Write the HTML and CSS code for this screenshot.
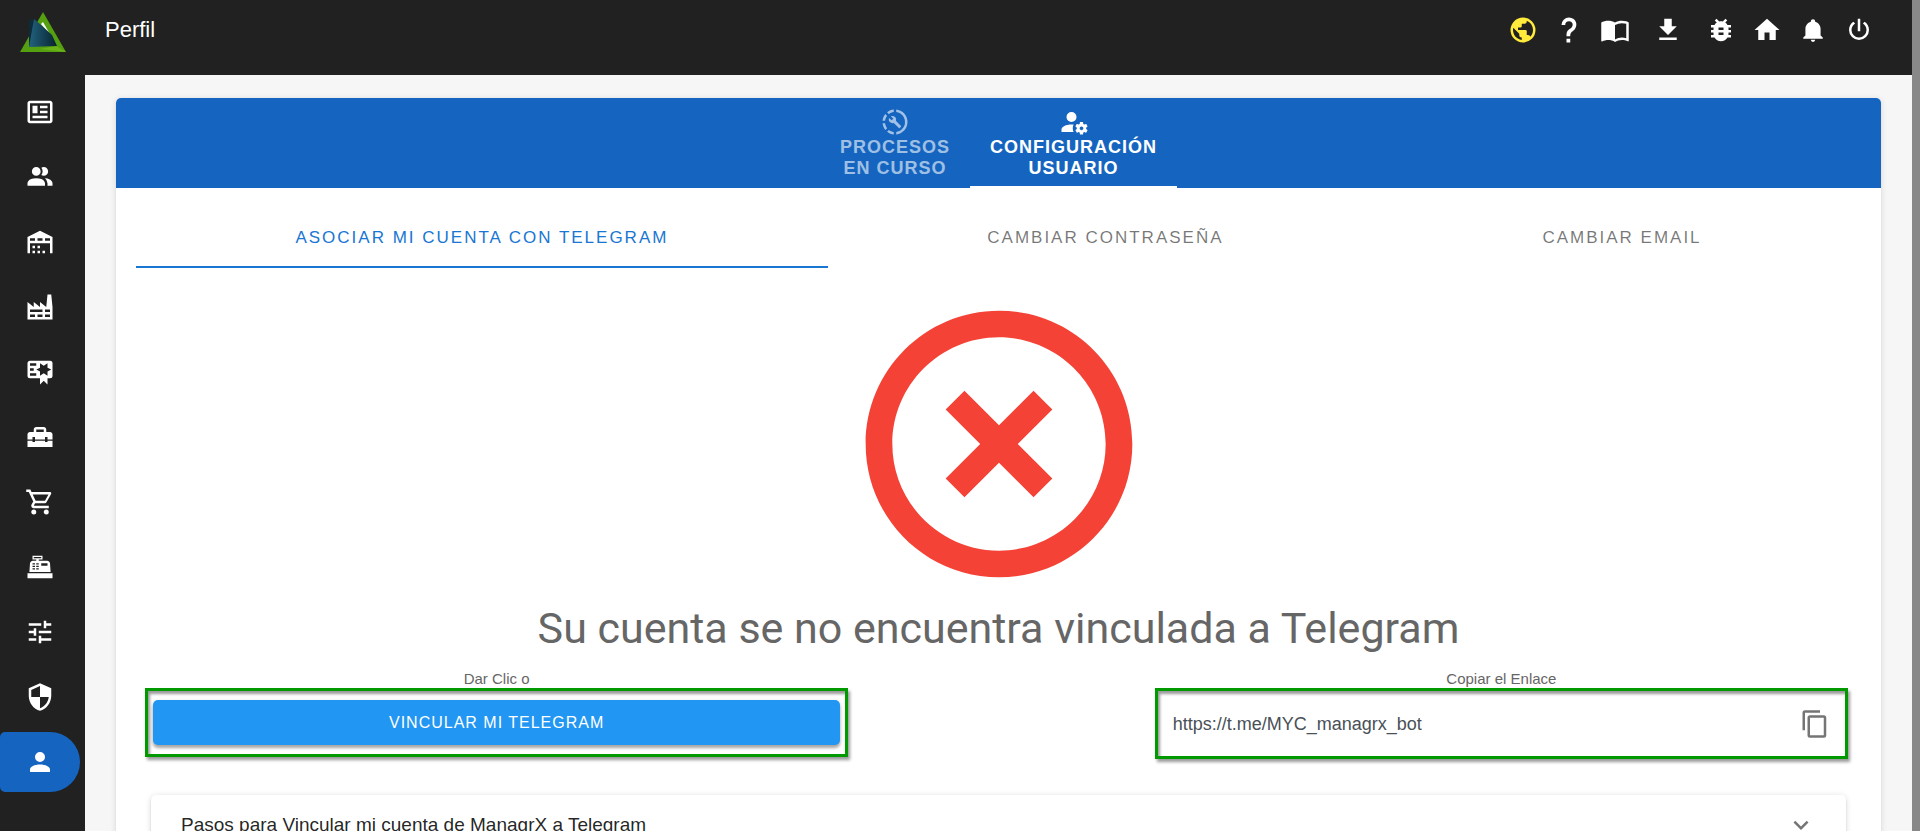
FILE: index.html
```
<!DOCTYPE html>
<html lang="es">
<head>
	<meta charset="utf-8">
	<meta name="viewport" content="width=device-width, initial-scale=1">
	<title>Perfil</title>
	<link rel="stylesheet" href="styles.css">
</head>
<body>
	<div class="app">
		<header class="topbar">
			<a href="#" class="logo" aria-label="Inicio">
				<svg viewBox="0 0 46 40">
					<defs>
						<linearGradient id="blade" x1="0" x2="1" y1="0" y2="0">
							<stop offset="0" stop-color="#22627f"/>
							<stop offset="1" stop-color="#08222e"/>
						</linearGradient>
					</defs>
					<path fill="#55a010" d="M23 0L46 40H0Z"/>
					<path fill="#6cb31a" d="M36 34L46 40L20 37Z"/>
					<path fill="#fff" d="M21 12L23 10L31 24Z"/>
					<path fill="#0d2c3b" d="M9 8L13 7L16 34H9Z"/>
					<path fill="url(#blade)" d="M14 7L20 12L32 23L37 34L9 35Z"/>
				</svg>
			</a>
			<h1 class="page-title">Perfil</h1>
			<nav class="actions">
				<button type="button" class="action yellow" aria-label="Idioma"><svg viewBox="0 0 24 24"><path d="M17.9,17.39C17.64,16.59 16.89,16 16,16H15V13A1,1 0 0,0 14,12H8V10H10A1,1 0 0,0 11,9V7H13A2,2 0 0,0 15,5V4.59C17.93,5.77 20,8.64 20,12C20,14.08 19.2,15.97 17.9,17.39M11,19.93C7.05,19.44 4,16.08 4,12C4,11.38 4.08,10.78 4.21,10.21L9,15V16A2,2 0 0,0 11,18M12,2A10,10 0 0,0 2,12A10,10 0 0,0 12,22A10,10 0 0,0 22,12A10,10 0 0,0 12,2Z"/></svg></button>
				<button type="button" class="action" aria-label="Ayuda"><svg viewBox="0 0 24 24"><path d="M10,19H13V22H10V19M12,2C17.35,2.22 19.68,7.62 16.5,11.67C15.67,12.67 14.33,13.33 13.67,14.17C13,15 13,16 13,17H10C10,15.33 10,13.92 10.67,12.92C11.33,11.92 12.67,11.33 13.5,10.67C15.92,8.43 15.32,5.26 12,5A3,3 0 0,0 9,8H6A6,6 0 0,1 12,2Z"/></svg></button>
				<button type="button" class="action" aria-label="Manual"><svg viewBox="0 0 24 24"><path d="M21,5C19.89,4.65 18.67,4.5 17.5,4.5C15.55,4.5 13.45,4.9 12,6C10.55,4.9 8.45,4.5 6.5,4.5C4.55,4.5 2.45,4.9 1,6V20.65C1,20.9 1.25,21.15 1.5,21.15C1.6,21.15 1.65,21.1 1.75,21.1C3.1,20.45 5.05,20 6.5,20C8.45,20 10.55,20.4 12,21.5C13.35,20.65 15.8,20 17.5,20C19.15,20 20.85,20.3 22.25,21.05C22.35,21.1 22.4,21.1 22.5,21.1C22.75,21.1 23,20.85 23,20.6V6C22.4,5.55 21.75,5.25 21,5M21,18.5C19.9,18.15 18.7,18 17.5,18C15.8,18 13.35,18.65 12,19.5V8C13.35,7.15 15.8,6.5 17.5,6.5C18.7,6.5 19.9,6.65 21,7V18.5Z"/></svg></button>
				<button type="button" class="action spaced" aria-label="Descargar"><svg viewBox="0 0 24 24"><path d="M5,20H19V18H5M19,9H15V3H9V9H5L12,16L19,9Z"/></svg></button>
				<button type="button" class="action" aria-label="Reportar error"><svg viewBox="0 0 24 24"><path d="M14,12H10V10H14M14,16H10V14H14M20,8H17.19C16.74,7.22 16.12,6.55 15.37,6.04L17,4.41L15.59,3L13.42,5.17C12.96,5.06 12.49,5 12,5C11.51,5 11.04,5.06 10.59,5.17L8.41,3L7,4.41L8.62,6.04C7.88,6.55 7.26,7.22 6.81,8H4V10H6.09C6.04,10.33 6,10.66 6,11V12H4V14H6V15C6,15.34 6.04,15.67 6.09,16H4V18H6.81C7.85,19.79 9.78,21 12,21C14.22,21 16.15,19.79 17.19,18H20V16H17.91C17.96,15.67 18,15.34 18,15V14H20V12H18V11C18,10.66 17.96,10.33 17.91,10H20V8Z"/></svg></button>
				<button type="button" class="action" aria-label="Inicio"><svg viewBox="0 0 24 24"><path d="M10,20V14H14V20H19V12H22L12,3L2,12H5V20H10Z"/></svg></button>
				<button type="button" class="action small" aria-label="Notificaciones"><svg viewBox="0 0 24 24"><path d="M21,19V20H3V19L5,17V11C5,7.9 7.03,5.17 10,4.29C10,4.19 10,4.1 10,4A2,2 0 0,1 12,2A2,2 0 0,1 14,4C14,4.1 14,4.19 14,4.29C16.97,5.17 19,7.9 19,11V17L21,19M14,21A2,2 0 0,1 12,23A2,2 0 0,1 10,21"/></svg></button>
				<button type="button" class="action" aria-label="Salir"><svg viewBox="0 0 24 24"><path d="M16.56,5.44L15.11,6.89C16.84,7.94 18,9.83 18,12A6,6 0 0,1 12,18A6,6 0 0,1 6,12C6,9.83 7.16,7.94 8.88,6.88L7.44,5.44C5.36,6.88 4,9.28 4,12A8,8 0 0,0 12,20A8,8 0 0,0 20,12C20,9.28 18.64,6.88 16.56,5.44M13,3H11V13H13"/></svg></button>
			</nav>
		</header>

		<nav class="sidebar">
			<a href="#" aria-label="Noticias"><svg viewBox="0 0 24 24"><path d="M20 5L20 19L4 19L4 5H20M20 3H4C2.89 3 2 3.89 2 5V19C2 20.11 2.89 21 4 21H20C21.11 21 22 20.11 22 19V5C22 3.89 21.11 3 20 3M18 15H6V17H18V15M10 7H6V13H10V7M12 9H18V7H12V9M18 11H12V13H18V11Z"/></svg></a>
			<a href="#" aria-label="Terceros"><svg viewBox="0 0 24 24"><path d="M16 17V19H2V17S2 13 9 13 16 17 16 17M12.5 7.5A3.5 3.5 0 1 0 9 11A3.5 3.5 0 0 0 12.5 7.5M15.94 13A5.32 5.32 0 0 1 18 17V19H22V17S22 13.37 15.94 13M15 4A3.39 3.39 0 0 0 13.07 4.59A5 5 0 0 1 13.07 10.41A3.39 3.39 0 0 0 15 11A3.5 3.5 0 0 0 15 4Z"/></svg></a>
			<a href="#" aria-label="Bodegas"><svg viewBox="0 0 24 24"><path d="M6 19H8V21H6V19M12 3L2 8V21H4V13H20V21H22V8L12 3M8 11H4V9H8V11M14 11H10V9H14V11M20 11H16V9H20V11M6 15H8V17H6V15M10 15H12V17H10V15M10 19H12V21H10V19M14 19H16V21H14V19Z"/></svg></a>
			<a href="#" aria-label="Producción"><svg viewBox="0 0 24 24"><path d="M4,18V20H8V18H4M4,14V16H14V14H4M10,18V20H14V18H10M16,14V16H20V14H16M16,18V20H20V18H16M2,22V8L7,12V8L12,12V8L17,12L18,2H21L22,12V22H2Z"/></svg></a>
			<a href="#" aria-label="Calidad"><svg viewBox="0 0 24 24"><path d="M4,3C2.89,3 2,3.89 2,5V15A2,2 0 0,0 4,17H12V22L15,19L18,22V17H20A2,2 0 0,0 22,15V8L22,6V5A2,2 0 0,0 20,3H16V3H4M12,5L15,7L18,5V8.5L21,10L18,11.5V15L15,13L12,15V11.5L9,10L12,8.5V5M4,5H9V7H4V5M4,9H7V11H4V9M4,13H9V15H4V13Z"/></svg></a>
			<a href="#" aria-label="Mantenimiento"><svg viewBox="0 0 24 24"><path d="M18 16H16V15H8V16H6V15H2V20H22V15H18V16M17 8V6C17 4.9 16.1 4 15 4H9C7.9 4 7 4.9 7 6V8H4C2.9 8 2 8.9 2 10V14H6V12H8V14H16V12H18V14H22V10C22 8.9 21.1 8 20 8H17M15 8H9V6H15V8Z"/></svg></a>
			<a href="#" aria-label="Compras"><svg viewBox="0 0 24 24"><path d="M17,18A2,2 0 0,1 19,20A2,2 0 0,1 17,22C15.89,22 15,21.1 15,20C15,18.89 15.89,18 17,18M1,2H4.27L5.21,4H20A1,1 0 0,1 21,5C21,5.17 20.95,5.34 20.88,5.5L17.3,11.97C16.96,12.58 16.3,13 15.55,13H8.1L7.2,14.63L7.17,14.75A0.25,0.25 0 0,0 7.42,15H19V17H7C5.89,17 5,16.1 5,15C5,14.65 5.09,14.32 5.24,14.04L6.6,11.59L3,4H1V2M7,18A2,2 0 0,1 9,20A2,2 0 0,1 7,22C5.89,22 5,21.1 5,20C5,18.89 5.89,18 7,18M16,11L18.78,6H6.14L8.5,11H16Z"/></svg></a>
			<a href="#" aria-label="Ventas"><svg viewBox="0 0 24 24"><path d="M2,17H22V21H2V17M6.25,7H9V6H6V3H14V6H11V7H17.8C18.8,7 19.8,8 20,9L20.5,16H3.5L4,9C4.25,8 5.25,7 6.25,7M13,9V11H18V9H13M6,9V10H8V9H6M9,9V10H11V9H9M6,11V12H8V11H6M9,11V12H11V11H9M6,13V14H8V13H6M9,13V14H11V13H9M7,4V5H13V4H7Z"/></svg></a>
			<a href="#" aria-label="Ajustes"><svg viewBox="0 0 24 24"><path d="M3,17V19H9V17H3M3,5V7H13V5H3M13,21V19H21V17H13V15H11V21H13M7,9V11H3V13H7V15H9V9H7M21,13V11H11V13H21M15,9H17V7H21V5H17V3H15V9Z"/></svg></a>
			<a href="#" aria-label="Seguridad"><svg viewBox="0 0 24 24"><path d="M12,12H19C18.47,16.11 15.72,19.78 12,20.92V12H5V6.3L12,3.19M12,1L3,5V11C3,16.55 6.84,21.73 12,23C17.16,21.73 21,16.55 21,11V5L12,1Z"/></svg></a>
			<a href="#" class="active" aria-label="Perfil"><svg viewBox="0 0 24 24"><path d="M12,4A4,4 0 0,1 16,8A4,4 0 0,1 12,12A4,4 0 0,1 8,8A4,4 0 0,1 12,4M12,14C16.42,14 20,15.79 20,18V20H4V18C4,15.79 7.58,14 12,14Z"/></svg></a>
		</nav>

		<main class="content">
			<section class="card">
				<div class="main-tabs">
					<button type="button" class="main-tab">
						<svg viewBox="0 0 24 24"><path d="M13 2.03V2.05L13 4.05C17.39 4.59 20.5 8.58 19.96 12.97C19.5 16.61 16.64 19.5 13 19.93V21.93C18.5 21.38 22.5 16.5 21.95 11C21.5 6.25 17.73 2.5 13 2.03M11 2.06C9.05 2.25 7.19 3 5.67 4.26L7.1 5.74C8.22 4.84 9.57 4.26 11 4.06V2.06M4.26 5.67C3 7.19 2.25 9.04 2.05 11H4.05C4.24 9.58 4.8 8.23 5.69 7.1L4.26 5.67M2.06 13C2.26 14.96 3.03 16.81 4.27 18.33L5.69 16.9C4.81 15.77 4.24 14.42 4.06 13H2.06M7.1 18.37L5.67 19.74C7.18 21 9.04 21.79 11 22V20C9.58 19.82 8.23 19.25 7.1 18.37M16.82 15.19L12.71 11.08C13.12 10.04 12.89 8.82 12.03 7.97C11.13 7.06 9.78 6.88 8.69 7.38L10.63 9.32L9.28 10.68L7.29 8.73C6.75 9.82 7 11.17 7.88 12.08C8.74 12.94 9.96 13.16 11 12.76L15.11 16.86C15.29 17.05 15.56 17.05 15.74 16.86L16.78 15.83C17 15.65 17 15.33 16.82 15.19Z"/></svg>
						<span>Procesos<br>en curso</span>
					</button>
					<button type="button" class="main-tab active">
						<svg viewBox="0 0 24 24"><path d="M10 4A4 4 0 0 0 6 8A4 4 0 0 0 10 12A4 4 0 0 0 14 8A4 4 0 0 0 10 4M17 12C16.87 12 16.76 12.09 16.74 12.21L16.55 13.53C16.25 13.66 15.96 13.82 15.7 14L14.46 13.5C14.35 13.5 14.22 13.5 14.15 13.63L13.15 15.36C13.09 15.47 13.11 15.6 13.21 15.68L14.27 16.5C14.25 16.67 14.24 16.83 14.24 17C14.24 17.17 14.25 17.33 14.27 17.5L13.21 18.32C13.12 18.4 13.09 18.53 13.15 18.64L14.15 20.37C14.21 20.5 14.34 20.5 14.46 20.5L15.7 20C15.96 20.18 16.24 20.35 16.55 20.47L16.74 21.79C16.76 21.91 16.86 22 17 22H19C19.11 22 19.22 21.91 19.24 21.79L19.43 20.47C19.73 20.34 20 20.18 20.27 20L21.5 20.5C21.63 20.5 21.76 20.5 21.83 20.37L22.83 18.64C22.89 18.53 22.86 18.4 22.77 18.32L21.7 17.5C21.72 17.33 21.74 17.17 21.74 17C21.74 16.83 21.73 16.67 21.7 16.5L22.76 15.68C22.85 15.6 22.88 15.47 22.82 15.36L21.82 13.63C21.76 13.5 21.63 13.5 21.5 13.5L20.27 14C20 13.82 19.73 13.65 19.42 13.53L19.23 12.21C19.22 12.09 19.11 12 19 12H17M10 14C5.58 14 2 15.79 2 18V20H11.68A7 7 0 0 1 11 17A7 7 0 0 1 11.64 14.09C11.11 14.03 10.56 14 10 14M18 15.5C18.83 15.5 19.5 16.17 19.5 17C19.5 17.83 18.83 18.5 18 18.5C17.16 18.5 16.5 17.83 16.5 17C16.5 16.17 17.17 15.5 18 15.5Z"/></svg>
						<span>Configuración<br>usuario</span>
					</button>
				</div>

				<div class="card-body">
					<div class="sub-tabs">
						<button type="button" class="sub-tab active">Asociar mi cuenta con Telegram</button>
						<button type="button" class="sub-tab">Cambiar contraseña</button>
						<button type="button" class="sub-tab">Cambiar email</button>
					</div>

					<div class="status">
						<svg viewBox="0 0 24 24"><path d="M12,20C7.59,20 4,16.41 4,12C4,7.59 7.59,4 12,4C16.41,4 20,7.59 20,12C20,16.41 16.41,20 12,20M12,2C6.47,2 2,6.47 2,12C2,17.53 6.47,22 12,22C17.53,22 22,17.53 22,12C22,6.47 17.53,2 12,2M14.59,8L12,10.59L9.41,8L8,9.41L10.59,12L8,14.59L9.41,16L12,13.41L14.59,16L16,14.59L13.41,12L16,9.41L14.59,8Z"/></svg>
						<h2>Su cuenta se no encuentra vinculada a Telegram</h2>
					</div>

					<div class="link-row">
						<div class="link-col">
							<span class="caption">Dar Clic o</span>
							<div class="frame frame-button">
								<button type="button" class="btn">Vincular mi Telegram</button>
							</div>
						</div>
						<div class="link-col">
							<label class="caption" for="enlace">Copiar el Enlace</label>
							<div class="frame frame-link">
								<input type="text" id="enlace" value="https://t.me/MYC_managrx_bot" readonly>
								<button type="button" id="copy" class="copy" aria-label="Copiar"><svg viewBox="0 0 24 24"><path d="M19,21H8V7H19M19,5H8A2,2 0 0,0 6,7V21A2,2 0 0,0 8,23H19A2,2 0 0,0 21,21V7A2,2 0 0,0 19,5M16,1H4A2,2 0 0,0 2,3V17H4V3H16V1Z"/></svg></button>
							</div>
						</div>
					</div>

					<div class="panel">
						<button type="button" class="panel-header">
							<span>Pasos para Vincular mi cuenta de ManagrX a Telegram</span>
							<svg viewBox="0 0 24 24"><path d="M7.41,8.58L12,13.17L16.59,8.58L18,10L12,16L6,10L7.41,8.58Z"/></svg>
						</button>
					</div>
				</div>
			</section>
		</main>

		<div class="scrollbar"></div>
	</div>
</body>
</html>
```

FILE: styles.css
```
* {
	box-sizing: border-box;
}

body {
	margin: 0;
	overflow: hidden;
	background: #f6f6f6;
	color: rgba(0, 0, 0, 0.87);
	font-family: "Liberation Sans", Arial, Helvetica, sans-serif;
}

button {
	padding: 0;
	border: none;
	background: none;
	color: inherit;
	font-family: inherit;
	cursor: pointer;
}

svg {
	display: block;
	flex: none;
	width: 30px;
	height: 30px;
	fill: currentColor;
	fill-rule: evenodd;
}

.app {
	display: grid;
	grid-template-columns: 85px 1fr 8px;
	grid-template-rows: 75px 1fr;
	height: 100vh;
}

/* Top bar */
.topbar {
	grid-column: 1 / 3;
	display: flex;
	align-items: flex-start;
	padding: 0 30px 0 20px;
	background: #212121;
	color: #fff;
}

.logo {
	margin: 12px 39px 0 0;
}

.logo svg {
	width: 46px;
	height: 40px;
}

.page-title {
	margin: 0;
	font-size: 22px;
	font-weight: normal;
	line-height: 60px;
}

.actions {
	display: flex;
	margin-left: auto;
}

.action {
	display: flex;
	align-items: center;
	justify-content: center;
	width: 46px;
	height: 60px;
}

.action.spaced {
	margin: 0 7px;
}

.action.small svg {
	width: 26px;
	height: 26px;
}

.action.yellow {
	color: #ffeb3b;
}

/* Sidebar */
.sidebar {
	grid-row: 2;
	display: flex;
	flex-direction: column;
	gap: 5px;
	padding: 7px 5px 0 0;
	overflow: hidden;
	background: #212121;
}

.sidebar a {
	display: flex;
	flex: none;
	align-items: center;
	justify-content: center;
	height: 60px;
	border-radius: 5px 30px 30px 5px;
	color: #fff;
}

.sidebar a.active {
	background: #1565c0;
}

/* Content */
.content {
	padding: 23px 31px;
	overflow: hidden;
}

.card {
	border-radius: 5px;
	background: #fff;
	box-shadow: 0 4px 2px -2px rgba(0, 0, 0, 0.2), 0 1px 1px rgba(0, 0, 0, 0.14), 0 1px 6px rgba(0, 0, 0, 0.12);
}

.main-tabs {
	display: flex;
	justify-content: center;
	height: 90px;
	border-radius: 5px 5px 0 0;
	background: #1565c0;
}

.main-tab {
	display: flex;
	flex-direction: column;
	align-items: center;
	justify-content: center;
	padding: 0 20px;
	color: rgba(255, 255, 255, 0.6);
	font-size: 18px;
	font-weight: bold;
	line-height: 21px;
	letter-spacing: 1px;
	text-transform: uppercase;
}

.main-tab.active {
	box-shadow: inset 0 -2px #fff;
	color: #fff;
}

.card-body {
	padding: 20px;
}

.sub-tabs {
	display: flex;
}

.sub-tab {
	flex: 1 1 auto;
	height: 60px;
	color: rgba(0, 0, 0, 0.54);
	font-size: 17px;
	letter-spacing: 2px;
	text-transform: uppercase;
}

.sub-tab.active {
	box-shadow: inset 0 -2px #1976d2;
	color: #1976d2;
}

.status {
	display: flex;
	flex-direction: column;
	align-items: center;
	padding-top: 16px;
	color: #666;
}

.status svg {
	width: 320px;
	height: 320px;
	color: #f44336;
}

.status h2 {
	margin: 0;
	font-family: Roboto, sans-serif;
	font-size: 43px;
	font-weight: normal;
	line-height: 48px;
}

/* Button and link */
.link-row {
	display: grid;
	grid-template-columns: 704fr 694fr;
	column-gap: 18%;
	align-items: start;
	padding: 17px 13px 0 9px;
}

.link-col {
	display: flex;
	flex-direction: column;
}

.caption {
	color: #666;
	font-size: 15px;
	line-height: 19px;
	text-align: center;
}

.frame {
	display: flex;
	align-items: center;
	border: 3px solid #009a00;
	box-shadow: 2px 3px 3px rgba(0, 0, 0, 0.4), inset 2px 3px 3px rgba(0, 0, 0, 0.4);
}

.frame-button {
	padding: 9px 5px;
}

.frame-link {
	height: 71px;
	padding: 0 15px;
}

.btn {
	flex: 1;
	height: 45px;
	border-radius: 5px;
	background: #2196f3;
	box-shadow: 0 3px 3px rgba(0, 0, 0, 0.3), 0 1px 5px rgba(0, 0, 0, 0.12);
	color: #fff;
	font-size: 16px;
	letter-spacing: 1px;
	text-transform: uppercase;
}

.frame-link input {
	flex: 1;
	min-width: 0;
	padding: 0;
	border: none;
	outline: none;
	background: none;
	color: #495057;
	font-family: inherit;
	font-size: 18px;
	line-height: 24px;
}

.copy {
	color: #757575;
}

.panel {
	margin: 36px 15px 0;
	border-radius: 5px;
	background: #fff;
	box-shadow: 0 2px 2px rgba(0, 0, 0, 0.14), 0 1px 6px rgba(0, 0, 0, 0.14);
}

.panel-header {
	display: flex;
	align-items: center;
	justify-content: space-between;
	width: 100%;
	height: 60px;
	padding: 0 30px;
	font-size: 19px;
	text-align: left;
}

.panel-header svg {
	color: #757575;
}

.scrollbar {
	grid-column: 3;
	grid-row: 1 / 3;
	background: #888;
}
```
